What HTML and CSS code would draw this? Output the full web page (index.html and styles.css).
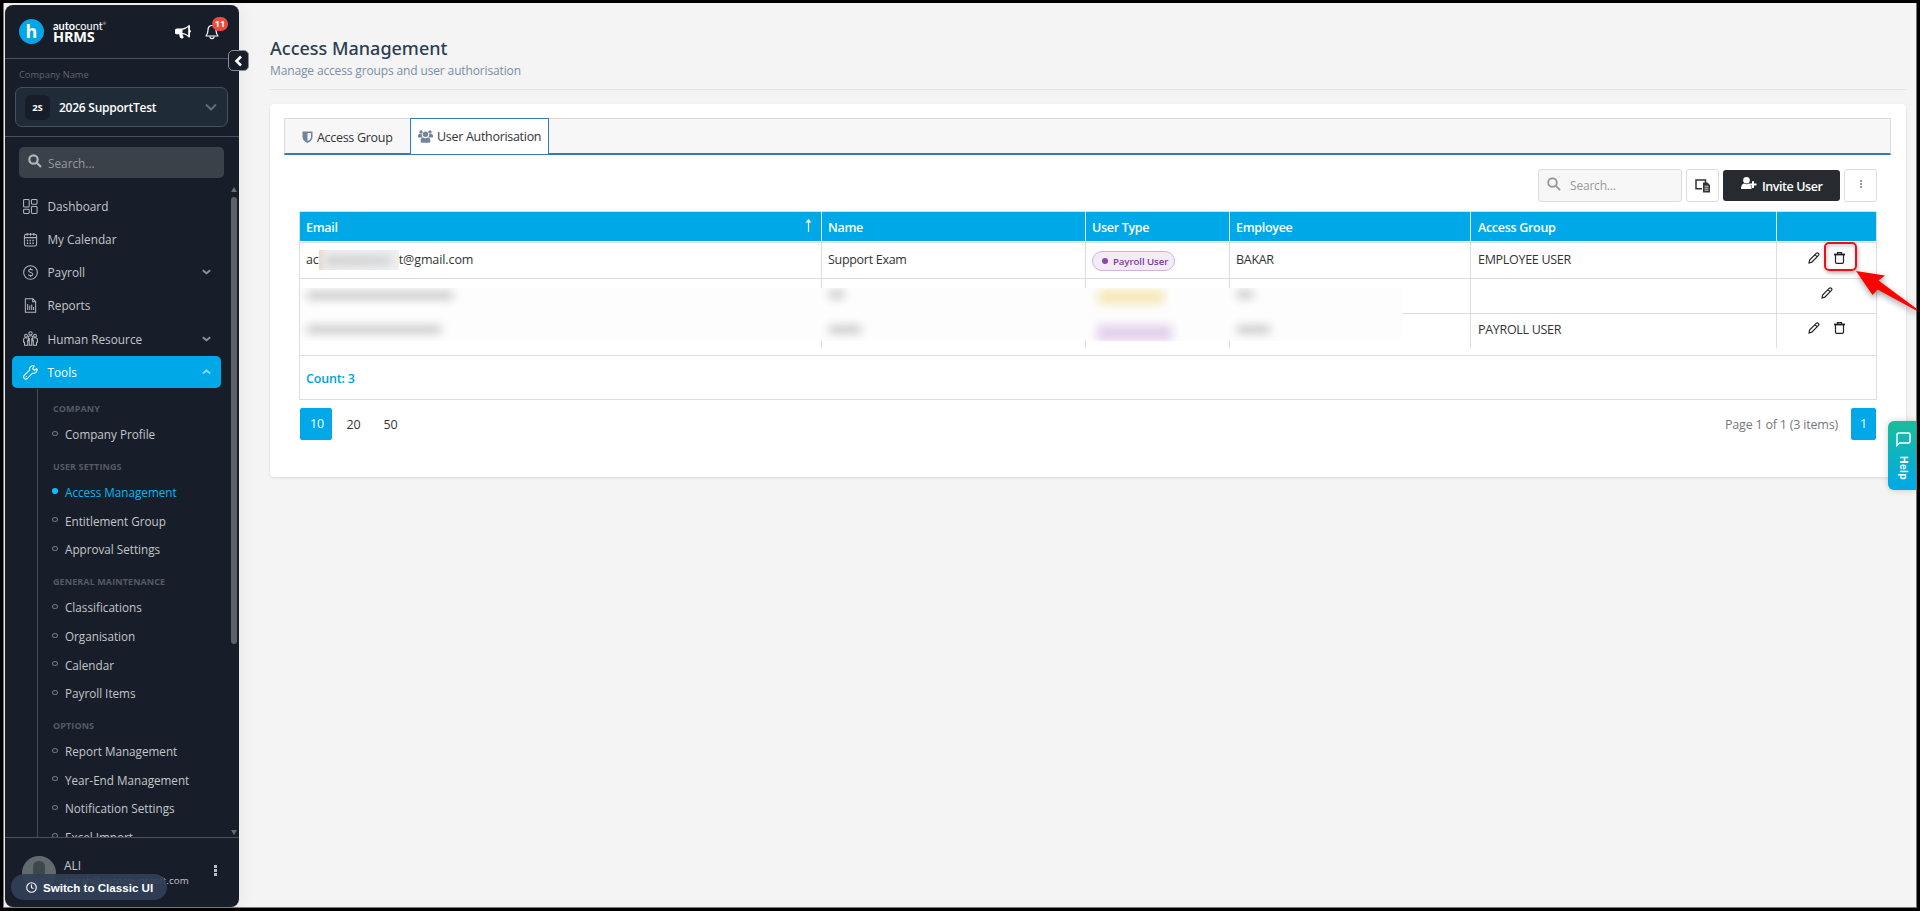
FILE: index.html
```html
<!DOCTYPE html>
<html lang="en">
<head>
	<meta charset="utf-8">
	<title>Access Management</title>
	<link rel="stylesheet" href="styles.css">
</head>
<body>
	<div class="window">
		<aside class="sidebar">
			<div class="brand">
				<span class="brand-logo">h</span>
				<div class="brand-name">
					<div class="brand-top"><b>auto</b>count<sup>®</sup></div>
					<div class="brand-bottom">HRMS</div>
				</div>
				<svg class="horn" width="16" height="14" viewBox="0 0 16 14"><path fill="#fff" fill-rule="evenodd" d="M14 0c.6 0 1 .4 1 1v4c1.300.3 1.300 2.200 0 2.500v4c0 .7-.5 1-1 1-2-1.800-4-2.900-6.500-3.200.1 1 .5 2.200 1.200 3-.6 1.600-2.700 1.500-3.500.5-.8-1.300-1-2.400-.9-3.500H2C.8 9.300 0 8.700 0 7.700V5.300C0 4.200.8 3.500 2 3.500h4C9 3.400 11.800 2 14 0zm-.8 2C11.300 3.600 9.800 4.400 7.500 4.700v3.200c2.200.3 4 1.100 5.700 2.600z"/></svg>
				<div class="bell">
					<svg width="14" height="16" viewBox="0 0 14 16" fill="none" stroke="#fff" stroke-width="1.200"><path d="M7 1.500C4.500 1.500 3 3.400 3 6c0 3.500-1 4.500-2 6h12c-1-1.500-2-2.500-2-6 0-2.600-1.500-4.500-4-4.500z" stroke-linejoin="round"/><path d="M5 12.500c0 2.800 4 2.800 4 0"/></svg>
					<span class="bell-count">11</span>
				</div>
				<span class="collapse"><svg width="9" height="12" viewBox="0 0 9 12"><path d="M7 1.500 2.500 6 7 10.500" fill="none" stroke="#fff" stroke-width="2.600"/></svg></span>
			</div>

			<div class="company">
				<div class="company-label">Company Name</div>
				<div class="company-select">
					<span class="company-code">2S</span>
					<span class="company-value">2026 SupportTest</span>
					<svg width="12" height="8" viewBox="0 0 12 8"><path d="m1 1.500 5 5 5-5" fill="none" stroke="#626b73" stroke-width="2"/></svg>
				</div>
			</div>

			<div class="side-search">
				<svg width="14" height="14" viewBox="0 0 14 14" fill="none" stroke="#b0b4b8" stroke-width="2.200"><circle cx="5.500" cy="5.500" r="4.200"/><path d="m8.500 8.500 4.500 4.500"/></svg>
				<span>Search...</span>
			</div>

			<div class="menu-wrap">
				<nav class="menu">
					<a class="menu-item">
						<svg class="mi" viewBox="0 0 16 16"><rect x=".6" y=".6" width="6" height="8" rx="1"/><rect x="9" y=".6" width="6" height="5" rx="1"/><rect x=".6" y="11" width="6" height="4.400" rx="1"/><rect x="9" y="8" width="6" height="7.400" rx="1"/></svg>
						<span>Dashboard</span>
					</a>
					<a class="menu-item">
						<svg class="mi" viewBox="0 0 16 16"><rect x="1.500" y="2.500" width="13" height="12.500" rx="2"/><path d="M1.500 6h13M4.500 1v3M8 1v3M11.500 1v3"/><path d="M4 9h8M4 12h8" stroke-dasharray="1.500 1.500" stroke-width="1.500"/></svg>
						<span>My Calendar</span>
					</a>
					<a class="menu-item">
						<svg class="mi" viewBox="0 0 16 16"><circle cx="8" cy="8" r="7.300"/><path d="M10.300 5.800C9.800 4.300 6 4.200 6 6.200c0 2.200 4.400 1.200 4.400 3.600 0 2-4.200 2-4.700.2M8 3.200v1.500M8 11.300v1.500"/></svg>
						<span>Payroll</span>
						<svg class="arrow" viewBox="0 0 9 6"><path d="m.8 1.200 3.700 3 3.700-3"/></svg>
					</a>
					<a class="menu-item">
						<svg class="mi" viewBox="0 0 16 16"><path d="M2.500.7h8l3 3v11.600h-11zM10.300.9v3h3M5 12.800V6.500M7.200 12.800V8M9.300 12.800V7M11.300 12.800V9.500"/></svg>
						<span>Reports</span>
					</a>
					<a class="menu-item last">
						<svg class="mi" viewBox="0 0 16 16"><circle cx="8" cy="2.500" r="1.800"/><circle cx="3.200" cy="5" r="1.500"/><circle cx="12.800" cy="5" r="1.500"/><path d="M5.600 11V7q0-2 2.400-2t2.400 2v4M6.700 7.500v7.700h2.600V7.500M4.600 7.500Q.8 6.700.6 9v3h1v3.200H5V9.500M11.400 7.500q3.800-.8 4 1.500v3h-1v3.200H11V9.500"/></svg>
						<span>Human Resource</span>
						<svg class="arrow" viewBox="0 0 9 6"><path d="m.8 1.200 3.700 3 3.700-3"/></svg>
					</a>
					<a class="menu-item open">
						<svg class="mi" viewBox="0 0 16 16"><path d="M14.800 3.700 12.200 5.600 10.300 4l1.600-2.900C9 .1 6.300 2.400 7 5.500L1.300 11c-1.900 2.300 1 5.200 3.300 3.400l5.600-5.700c3.200.8 5.500-2 4.600-5z" stroke-linejoin="round"/><path d="m3 13 1-1"/></svg>
						<span>Tools</span>
						<svg class="arrow" viewBox="0 0 9 6"><path d="m.8 4.500 3.700-3 3.700 3"/></svg>
					</a>
					<div class="submenu">
						<h4>COMPANY</h4>
						<a>Company Profile</a>
						<h4>USER SETTINGS</h4>
						<a class="current">Access Management</a>
						<a>Entitlement Group</a>
						<a>Approval Settings</a>
						<h4>GENERAL MAINTENANCE</h4>
						<a>Classifications</a>
						<a>Organisation</a>
						<a>Calendar</a>
						<a>Payroll Items</a>
						<h4>OPTIONS</h4>
						<a>Report Management</a>
						<a>Year-End Management</a>
						<a>Notification Settings</a>
						<a>Excel Import</a>
					</div>
				</nav>
				<div class="scroll">
					<i class="scroll-up"></i>
					<i class="scroll-thumb"></i>
					<i class="scroll-down"></i>
				</div>
			</div>

			<div class="account">
				<svg class="avatar" width="34" height="34" viewBox="0 0 34 34"><circle cx="17" cy="17" r="17" fill="#616b6e"/><path d="M11 11q0-6 6-6t6 6v6q-1 5-6 5t-6-5z" fill="#3c474e"/></svg>
				<div class="account-text">
					<div class="account-name">ALI</div>
					<div class="account-mail">azirah@autocountsoft.com</div>
				</div>
				<span class="account-more"><i></i><i></i><i></i></span>
				<div class="classic">
					<svg width="11" height="11" viewBox="0 0 11 11" fill="none" stroke="#fff" stroke-width="1.100"><circle cx="5.500" cy="5.500" r="4.800"/><path d="M5.500 2.500v3.200l2 .9"/></svg>
					<span>Switch to Classic UI</span>
				</div>
			</div>
		</aside>

		<main class="main">
			<header class="page-head">
				<h1>Access Management</h1>
				<p>Manage access groups and user authorisation</p>
			</header>

			<section class="card">
				<div class="tabs">
					<div class="tab">
						<svg width="11" height="12" viewBox="0 0 11 12"><path fill="#73859c" fill-rule="evenodd" d="M.5.500h10V6c0 3-2.500 4.800-5 6-2.500-1.200-5-3-5-6zM5.500 2v8C7.500 9 9 8 9 6V2z"/></svg>
						<span>Access Group</span>
					</div>
					<div class="tab active">
						<svg width="15" height="13" viewBox="0 0 15 13" fill="#73859c"><circle cx="3" cy="2" r="1.700"/><circle cx="12" cy="2" r="1.700"/><circle cx="7.500" cy="4.300" r="2.700"/><path d="M0 7.500V5.800C0 4.500.8 4 2 4h1.800q-.2 2 .8 3.200L4 7.500zM15 7.500V5.800C15 4.500 14.200 4 13 4h-1.800q.2 2-.8 3.200l.6.3zM2.600 11c0-2.500 1-3.500 2.600-3.500q2.300 1.500 4.600 0c1.600 0 2.600 1 2.600 3.500 0 1.300-.8 1.800-1.800 1.800H4.400c-1 0-1.800-.5-1.800-1.800z"/></svg>
						<span>User Authorisation</span>
					</div>
				</div>

				<div class="content">
					<div class="toolbar">
						<div class="search">
							<svg width="14" height="14" viewBox="0 0 14 14" fill="none" stroke="#999" stroke-width="1.900"><circle cx="5.500" cy="5.500" r="4.300"/><path d="m8.600 8.600 4.500 4.500"/></svg>
							<span>Search...</span>
						</div>
						<div class="tool">
							<svg width="15" height="14" viewBox="0 0 15 14"><path d="M7 9.800H1V1h9.500v3" fill="none" stroke="#333" stroke-width="1.500"/><path fill="#333" d="M8 3.500h4.500L15 6v7.500H8z"/><path d="M9.500 7.200h4M9.500 9.200h4M9.500 11.200h4" stroke="#fff" stroke-width=".8"/></svg>
						</div>
						<div class="invite">
							<svg width="16" height="13" viewBox="0 0 16 13" fill="#fff"><circle cx="5.500" cy="3.300" r="3.300"/><path d="M0 12c0-3.500 1-5 3-5.500q2.500 1.500 5 0l1.300.5v2h1.200V12zM11 4.200h2v2.300h2.500v2H13V11h-2V8.500H8.800v-2H11z"/></svg>
							<span>Invite User</span>
						</div>
						<div class="tool more"><i></i><i></i><i></i></div>
					</div>

					<div class="grid">
						<div class="row head">
							<div>Email<svg class="sort" width="7" height="13" viewBox="0 0 7 13"><path d="M3.500 13V2" stroke="#fff" stroke-width="1.200"/><path d="M3.500 0 6.500 3.500h-6z" fill="#fff"/></svg></div>
							<div>Name</div>
							<div>User Type</div>
							<div>Employee</div>
							<div>Access Group</div>
							<div></div>
						</div>
						<div class="row">
							<div class="mail">ac<span class="mask"><i></i></span>t@gmail.com</div>
							<div>Support Exam</div>
							<div><span class="badge">Payroll User</span></div>
							<div>BAKAR</div>
							<div>EMPLOYEE USER</div>
							<div class="actions">
								<svg class="pen" viewBox="0 0 12 12"><path d="m1 11 .6-3L8.400 1.200q1-.9 2 .1t.1 2L3.800 10.200zM7 2.700l2.200 2.200" /></svg>
								<svg class="bin" viewBox="0 0 11 12"><path d="M1.500 3v7q0 1.300 1.300 1.300h5.400q1.300 0 1.300-1.300V3M3.500 2.300V.7h4v1.600"/><path d="M0 2.500h11" stroke-width="1.800"/></svg>
							</div>
						</div>
						<div class="row">
							<div></div>
							<div></div>
							<div></div>
							<div></div>
							<div></div>
							<div class="actions">
								<svg class="pen" viewBox="0 0 12 12"><path d="m1 11 .6-3L8.400 1.200q1-.9 2 .1t.1 2L3.800 10.200zM7 2.700l2.200 2.200" /></svg>
							</div>
						</div>
						<div class="row last">
							<div></div>
							<div></div>
							<div></div>
							<div></div>
							<div>PAYROLL USER</div>
							<div class="actions">
								<svg class="pen" viewBox="0 0 12 12"><path d="m1 11 .6-3L8.400 1.200q1-.9 2 .1t.1 2L3.800 10.200zM7 2.700l2.200 2.200" /></svg>
								<svg class="bin" viewBox="0 0 11 12"><path d="M1.500 3v7q0 1.300 1.300 1.300h5.400q1.300 0 1.300-1.300V3M3.500 2.300V.7h4v1.600"/><path d="M0 2.500h11" stroke-width="1.800"/></svg>
							</div>
						</div>
						<div class="summary">Count: 3</div>
						<!-- hidden personal details -->
						<div class="veil">
							<i class="smudge s1"></i>
							<i class="smudge s2"></i>
							<i class="smudge s3"></i>
							<i class="smudge s4"></i>
							<i class="smudge yellow"></i>
							<i class="smudge purple"></i>
							<i class="smudge s5"></i>
							<i class="smudge s6"></i>
						</div>
					</div>

					<div class="pager">
						<span class="size on">10</span>
						<span class="size">20</span>
						<span class="size">50</span>
						<span class="page-info">Page 1 of 1 (3 items)</span>
						<span class="page-no">1</span>
					</div>
				</div>
			</section>
		</main>

		<div class="help">
			<svg width="15" height="15" viewBox="0 0 15 15"><path d="M1 13.500V2.500Q1 1 2.500 1h10Q14 1 14 2.500v7q0 1.500-1.500 1.500h-9z" fill="none" stroke="#fff" stroke-width="1.400"/></svg>
			<span>Help</span>
		</div>
	</div>

	<div class="marker"></div>
	<svg class="pointer" width="64" height="42" viewBox="0 0 64 42"><path fill="#f00" d="m0 0 29 4.500-6.500 5L61 38v2L21.500 18.500l-5 5.500z"/></svg>
</body>
</html>
```
FILE: styles.css
```css
*, *::before {
	box-sizing: border-box;
}

body {
	margin: 0;
	padding-top: 3px;
	width: 1920px;
	height: 911px;
	position: relative;
	overflow: hidden;
	background: #000;
	font-family: "Open Sans", "Noto Sans", sans-serif;
	font-size: 13px;
	color: #333;
}

h1, h4, p {
	margin: 0;
}

svg {
	display: block;
	flex: none;
}

.window {
	position: relative;
	display: flex;
	width: 1914px;
	height: 905px;
	margin-left: 3px;
	border: 1px solid #777;
	border-top: 0;
	background: #f4f4f4;
	padding: 2px 0 0 1px;
	overflow: hidden;
}

/* sidebar */
.sidebar {
	flex: none;
	width: 234px;
	height: 902px;
	display: flex;
	flex-direction: column;
	background: #181e29;
	border-radius: 8px;
	color: #c4c6c9;
	box-shadow: 0 0 18px rgba(0,0,0,0.07);
	z-index: 1;
}

.brand {
	position: relative;
	height: 54px;
	flex: none;
	display: flex;
	align-items: center;
	padding: 0 14px;
	border-bottom: 1px solid #4a4f59;
}

.brand-logo {
	width: 25px;
	height: 25px;
	border-radius: 50%;
	background: #00a7e7;
	color: #fff;
	font-size: 18px;
	font-weight: 700;
	line-height: 25px;
	text-align: center;
}

.brand-name {
	margin-left: 9px;
	width: 122px;
	color: #fff;
}

.brand-top {
	font-size: 11px;
	line-height: 11px;
	font-family: Lato, sans-serif;
}

.brand-top sup {
	font-size: 4px;
	vertical-align: 5px;
	line-height: 0;
}

.brand-bottom {
	font-size: 14.5px;
	line-height: 12px;
	font-weight: 700;
	letter-spacing: -0.2px;
}

.bell {
	position: relative;
	margin-left: 14px;
	padding-top: 1px;
}

.bell-count {
	position: absolute;
	left: 7px;
	top: -6px;
	width: 16px;
	height: 14px;
	border-radius: 7px;
	background: #ea4c3d;
	color: #fff;
	font-size: 9px;
	font-weight: 700;
	line-height: 14px;
	text-align: center;
}

.collapse {
	position: absolute;
	right: -10px;
	bottom: -13px;
	width: 21px;
	height: 21px;
	display: flex;
	align-items: center;
	justify-content: center;
	border: 1px solid #8a8d92;
	border-radius: 5px;
	background: #181e29;
}

.company {
	flex: none;
	height: 78px;
	padding: 9px 11px 0 10px;
	border-bottom: 1px solid #4a4f59;
}

.company-label {
	padding-left: 4px;
	height: 19px;
	font-size: 9.3px;
	line-height: 13px;
	color: #5f656e;
}

.company-select {
	display: flex;
	align-items: center;
	height: 40px;
	padding: 0 10px 0 9px;
	border: 1px solid #474f59;
	border-radius: 7px;
	background: #1f2b37;
}

.company-code {
	width: 25px;
	height: 25px;
	border-radius: 6px;
	background: #181e29;
	color: #fff;
	font-size: 9.5px;
	font-weight: 700;
	line-height: 25px;
	text-align: center;
}

.company-value {
	flex: 1;
	margin-left: 9px;
	color: #fff;
	font-size: 12px;
	font-weight: 600;
	letter-spacing: -0.25px;
}

.side-search {
	flex: none;
	display: flex;
	align-items: center;
	gap: 6px;
	height: 31px;
	margin: 10px 15px 0 14px;
	padding: 1px 0 0 9px;
	border-radius: 5px;
	background: #3b4149;
	color: #969a9f;
	font-size: 11.8px;
}

.side-search svg {
	margin-top: -4px;
}

.menu-wrap {
	flex: none;
	display: flex;
	justify-content: space-between;
	height: 659px;
	overflow: hidden;
}

.menu {
	width: 216px;
	padding: 12px 0 0 7px;
}

.menu-item {
	display: flex;
	align-items: center;
	height: 33px;
	padding: 0 10px 1px 11px;
	font-size: 11.8px;
}

.menu-item span {
	flex: 1;
	margin-left: 9.5px;
}

.mi {
	width: 15px;
	height: 15px;
	fill: none;
	stroke: #b4b7bb;
	stroke-width: 1.1;
}

.arrow {
	width: 9px;
	height: 6px;
	fill: none;
	stroke: #8b9096;
	stroke-width: 2;
}

.menu-item.last {
	height: 34px;
}

.menu-item.open {
	height: 32px;
	padding-bottom: 0;
	border-radius: 5px;
	background: #00a8e8;
	color: #fff;
	font-weight: 500;
}

.open .mi {
	stroke: #fff;
}

.open .arrow {
	stroke: #8bd8f6;
}

.submenu {
	margin: 1px 0 0 25px;
	padding: 1.6px 0 0 14px;
	border-left: 1px solid #454b55;
}

.submenu h4 {
	height: 29.4px;
	padding: 11px 0 0 1px;
	font-size: 9px;
	line-height: 14px;
	font-weight: 700;
	letter-spacing: 0.1px;
	color: #555b64;
}

.submenu a {
	display: flex;
	align-items: center;
	height: 28.6px;
	font-size: 11.7px;
	white-space: nowrap;
}

.submenu a::before {
	content: "";
	width: 6px;
	height: 5px;
	margin: -2px 7px 0 0;
	border: 1px solid #70757d;
	border-radius: 50%;
}

.submenu a.current {
	color: #00b9f2;
}

.submenu a.current::before {
	height: 6px;
	border: 0;
	background: #00c3ff;
}

.scroll {
	width: 6px;
	margin-right: 2px;
	display: flex;
	flex-direction: column;
	align-items: center;
	padding: 9px 0 2px;
}

.scroll-up, .scroll-down {
	border: 3px solid transparent;
}

.scroll-up {
	border-top: 0;
	border-bottom: 5px solid #686d75;
}

.scroll-thumb {
	width: 6px;
	height: 447px;
	margin-top: 5px;
	border-radius: 3px;
	background: #5d626a;
}

.scroll-down {
	margin-top: auto;
	border-bottom: 0;
	border-top: 5px solid #686d75;
}

.account {
	position: relative;
	flex: 1;
	display: flex;
	padding: 18px 21px 0 17px;
	border-top: 1px solid #4a4f59;
}

.account-text {
	flex: 1;
	margin-left: 8px;
}

.account-name {
	font-size: 12px;
	line-height: 20px;
}

.account-mail {
	font-size: 9.7px;
	line-height: 10px;
	letter-spacing: 0.12px;
}

.account-more {
	display: flex;
	flex-direction: column;
	gap: 1px;
	margin: 9px 1px 0 0;
}

.account-more i {
	width: 3px;
	height: 3px;
	background: #b9bcc0;
}

.classic {
	position: absolute;
	left: 6px;
	top: 36px;
	width: 156px;
	height: 26px;
	display: flex;
	align-items: center;
	gap: 6px;
	padding-left: 15px;
	border-radius: 13px;
	background: rgba(48,64,86,0.93);
	color: #fff;
	font: 700 11.6px "Liberation Sans", sans-serif;
	white-space: nowrap;
}

/* main */
.main {
	flex: 1;
	padding: 31px 10px 0 31px;
}

.page-head {
	height: 54px;
	border-bottom: 1px solid #e5e5e6;
}

.page-head h1 {
	font-family: "Noto Sans", sans-serif;
	font-size: 18px;
	line-height: 24px;
	font-weight: 500;
	color: #2c3e50;
}

.page-head p {
	font-size: 12px;
	line-height: 21px;
	letter-spacing: -0.14px;
	color: #7b8ea6;
}

.card {
	height: 373px;
	margin-top: 14px;
	padding: 14px 15px 0 14px;
	border-radius: 4px;
	background: #fff;
	box-shadow: 0 1px 3px rgba(0,0,0,0.1);
}

.tabs {
	display: flex;
	height: 37px;
	border: 1px solid #dadada;
	border-bottom: 2px solid #337ab7;
	background: #f7f7f7;
}

.tab {
	display: flex;
	align-items: center;
	gap: 4px;
	width: 125px;
	padding: 2px 0 0 17px;
	font-size: 12.5px;
	letter-spacing: -0.3px;
	color: #333;
	white-space: nowrap;
}

.tab.active {
	width: 139px;
	height: 37px;
	margin-top: -1px;
	padding: 0 0 1px 7px;
	border: 1px solid #337ab7;
	background: #fff;
}

.content {
	padding: 14px 14px 0 15px;
}

.toolbar {
	display: flex;
	justify-content: flex-end;
	align-items: center;
	height: 33px;
}

.search, .tool {
	display: flex;
	align-items: center;
	height: 33px;
	border: 1px solid #ddd;
	border-radius: 3px;
}

.search {
	width: 144px;
	padding-left: 8px;
	gap: 9px;
	background: #f7f7f7;
	color: #999;
	font-size: 12px;
	letter-spacing: -0.2px;
}

.search svg {
	margin-top: -4px;
}

.tool {
	width: 33px;
	margin-left: 4px;
	justify-content: center;
}

.more {
	padding-bottom: 3px;
	flex-direction: column;
	gap: 1px;
}

.more i {
	width: 2px;
	height: 2px;
	background: #999;
}

.invite {
	display: flex;
	align-items: center;
	gap: 5px;
	width: 117px;
	height: 31px;
	margin-left: 4px;
	padding: 1px 0 0 18px;
	border-radius: 3px;
	background: #272b30;
	color: #fff;
	font-size: 12.5px;
	font-weight: 600;
	letter-spacing: -0.45px;
	white-space: nowrap;
}

.invite svg {
	margin-top: -5px;
}

.grid {
	position: relative;
	height: 189px;
	margin-top: 9px;
	border: 1px solid #ddd;
	font-size: 12.5px;
	letter-spacing: -0.3px;
}

.row {
	display: grid;
	grid-template-columns: 522px 264px 144px 241px 306px 1fr;
	height: 35px;
	border-bottom: 1px solid #ddd;
}

.row > div {
	position: relative;
	display: flex;
	align-items: center;
	padding: 0 0 2px 6px;
	border-right: 1px solid #ddd;
	white-space: nowrap;
}

.row > div:nth-child(5) {
	padding-left: 7px;
}

.row > .mail {
	letter-spacing: -0.1px;
}

.row.head > div {
	padding-bottom: 0;
	border-right-color: #e2f4fc;
}

.row > div:last-child, .row.head > div:last-child {
	border-right: 0;
}

.head {
	height: 31px;
	background: linear-gradient(#00a8e8 29px, #fff 29px);
	color: #fff;
	font-weight: 600;
}

.head .sort {
	margin: -3px 9px 0 auto;
}

.row:nth-child(2) {
	height: 36px;
}

.row.last {
	height: 34px;
	border-bottom: 0;
}

.row.last > div {
	padding-bottom: 4px;
}

.mask {
	width: 80px;
	height: 20px;
	overflow: hidden;
	background: linear-gradient(90deg, #ecd9c7, #eee 8%, #eef0f2);
}

.mask i {
	display: block;
	width: 66px;
	height: 7px;
	margin: 7px 6px;
	background: #c8c8c8;
	filter: blur(5px);
}

.badge {
	display: flex;
	align-items: center;
	width: 83px;
	height: 20px;
	margin-top: 3px;
	padding-left: 9px;
	border: 1px solid #d0b2dd;
	border-radius: 10px;
	background: #f4ebf8;
	color: #7d3c98;
	font-size: 9.7px;
	font-weight: 600;
	letter-spacing: -0.1px;
}

.badge::before {
	content: "";
	width: 6px;
	height: 6px;
	margin-right: 5px;
	border-radius: 50%;
	background: #8e44ad;
}

.row > .actions, .row.last > .actions {
	justify-content: center;
	gap: 14px;
	padding: 0 0 6px;
}

.pen, .bin {
	fill: none;
	stroke: #222;
	stroke-width: 1.2;
}

.pen {
	width: 12px;
	height: 12px;
}

.bin {
	width: 11px;
	height: 12px;
}

.summary {
	height: 44px;
	display: flex;
	align-items: center;
	margin-top: 7px;
	padding: 1px 0 0 6px;
	border-top: 1px solid #ddd;
	color: #00a0e0;
	font-weight: 600;
	letter-spacing: -0.2px;
}

.veil {
	position: absolute;
	left: 0;
	top: 76px;
	width: 1102px;
	height: 53px;
	overflow: hidden;
	background: #fdfdfd;
}

.smudge {
	position: absolute;
	height: 7px;
	filter: blur(5px);
	background: #c0c0c0;
}

.s1 {
	left: 7px;
	top: 4px;
	width: 146px;
}

.s2 {
	left: 7px;
	top: 38px;
	width: 134px;
}

.s3 {
	left: 529px;
	top: 3px;
	width: 15px;
}

.s4 {
	left: 529px;
	top: 38px;
	width: 32px;
}

.s5 {
	left: 937px;
	top: 3px;
	width: 16px;
}

.s6 {
	left: 937px;
	top: 38px;
	width: 33px;
}

.yellow {
	left: 798px;
	top: 2px;
	width: 66px;
	height: 14px;
	background: #f5e8b6;
}

.purple {
	left: 797px;
	top: 37px;
	width: 75px;
	height: 16px;
	background: #e3d0ec;
}

.pager {
	display: flex;
	align-items: center;
	height: 32px;
	margin-top: 8px;
	padding-left: 1px;
	font-size: 12.5px;
	letter-spacing: -0.2px;
}

.size {
	width: 37px;
	padding-left: 2px;
	text-align: center;
}

.size.on {
	width: 32px;
	margin-right: 2px;
}

.size.on, .page-no {
	border-radius: 2px;
	background: #00a8e8;
	color: #fff;
	line-height: 32px;
}

.page-info {
	margin: 0 13px 0 auto;
	color: #777;
}

.page-no {
	width: 25px;
	margin-right: 1px;
	text-align: center;
}

.help {
	position: absolute;
	right: 0;
	top: 418px;
	width: 28px;
	height: 69px;
	display: flex;
	flex-direction: column;
	align-items: center;
	gap: 9px;
	padding: 11px 0 0 3px;
	border-radius: 6px 0 0 6px;
	background: linear-gradient(#1abc9c, #00a8e8);
	box-shadow: 0 0 6px rgba(0,0,0,0.2);
	color: #fff;
	z-index: 2;
}

.help span {
	writing-mode: vertical-rl;
	font: 700 10.5px "Liberation Sans", sans-serif;
	letter-spacing: 0.3px;
}

/* callout on the delete button */
.marker {
	position: absolute;
	left: 1824px;
	top: 242px;
	width: 33px;
	height: 29px;
	border: 2px solid #e8111b;
	border-radius: 5px;
	box-shadow: 1px 2px 4px rgba(0,0,0,0.3), inset 1px 2px 4px rgba(0,0,0,0.2);
}

.pointer {
	position: absolute;
	left: 1856px;
	top: 271px;
	filter: drop-shadow(1px 3px 3px rgba(0,0,0,0.4));
}
```
